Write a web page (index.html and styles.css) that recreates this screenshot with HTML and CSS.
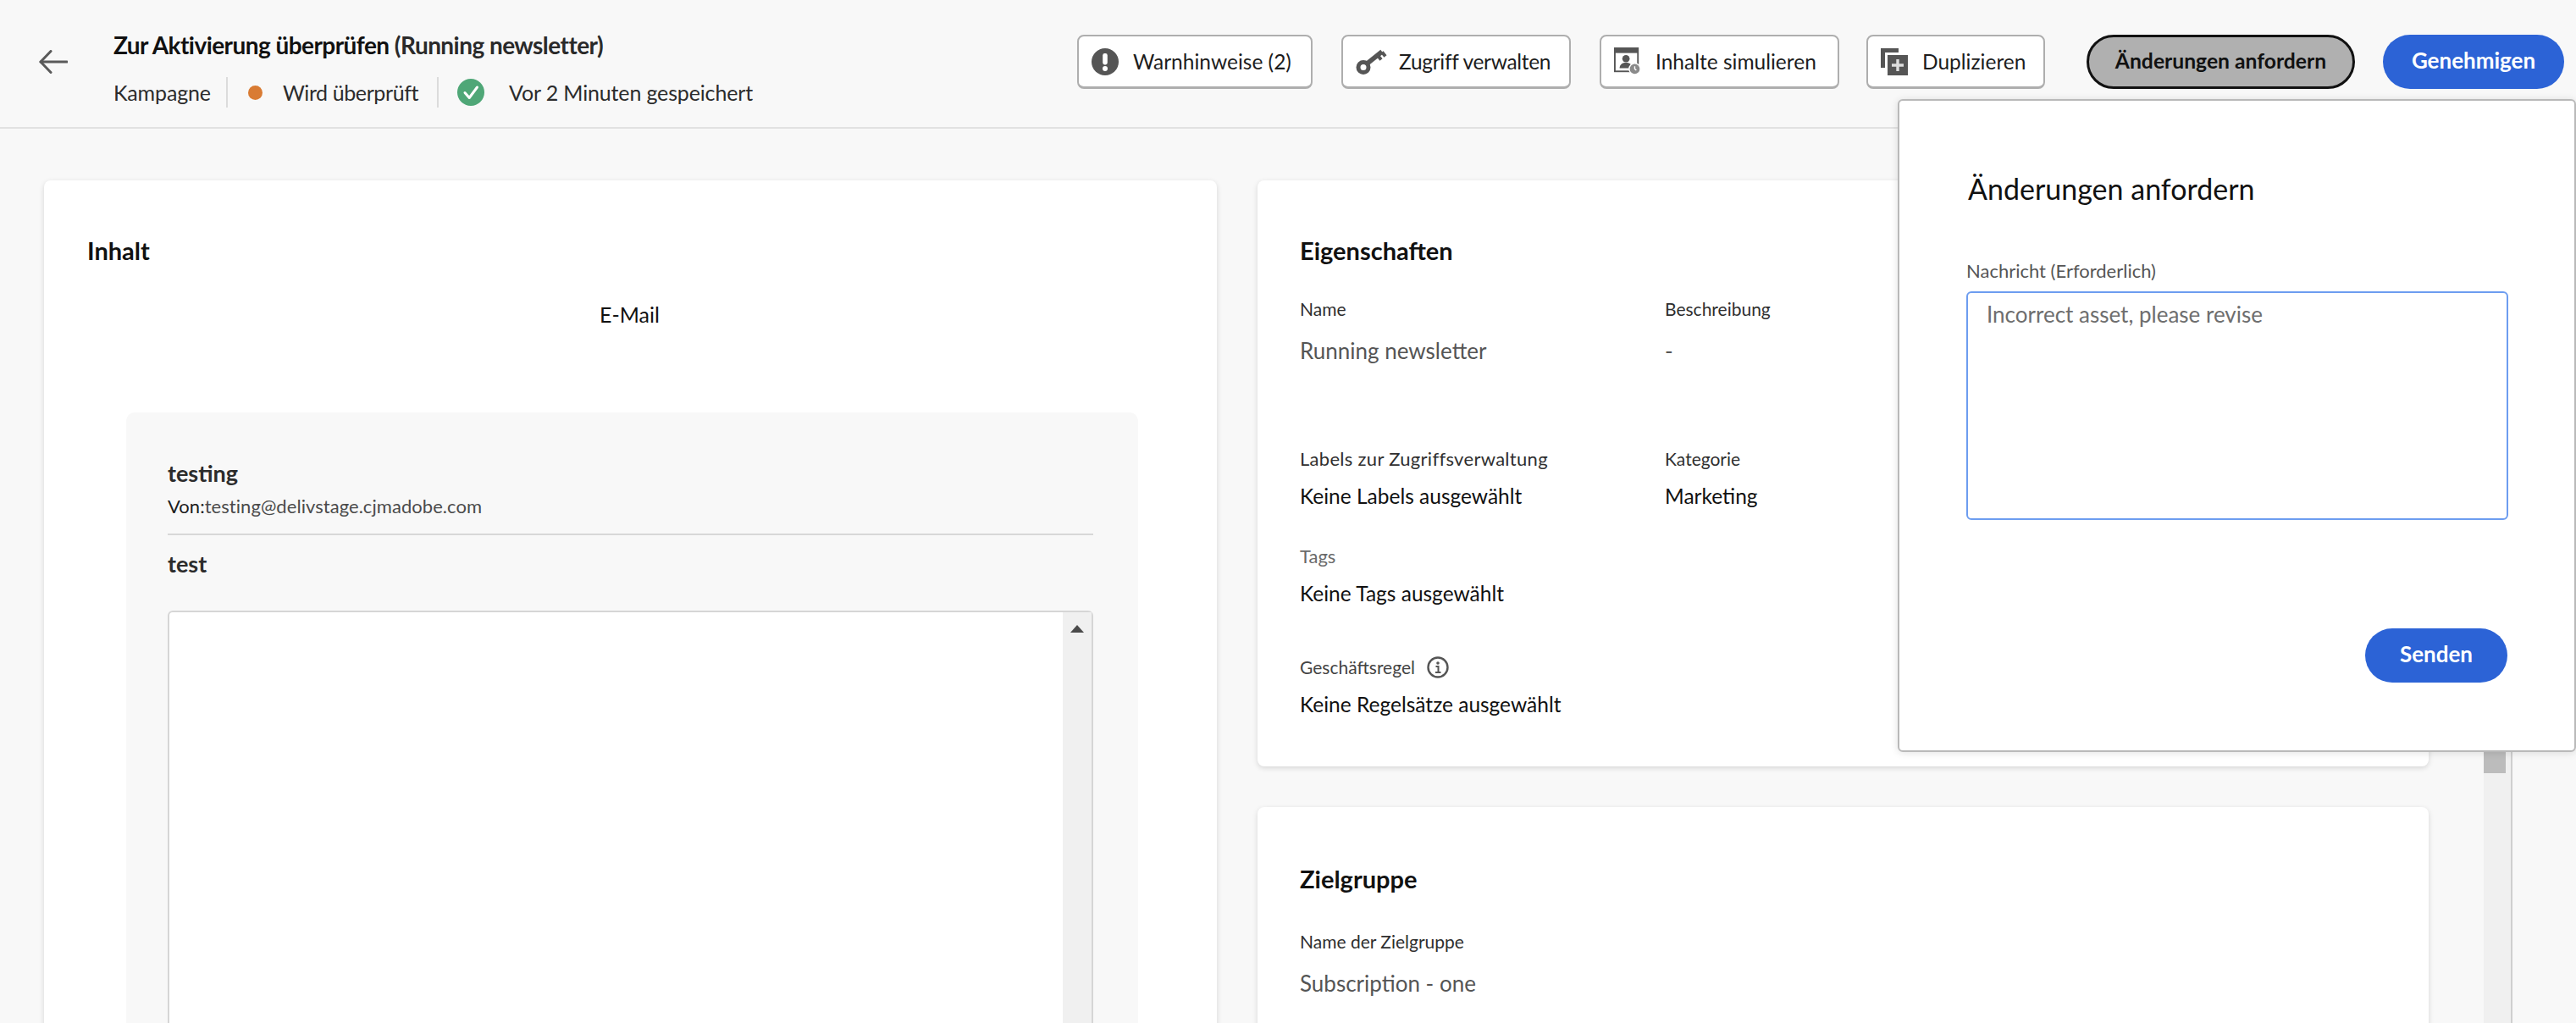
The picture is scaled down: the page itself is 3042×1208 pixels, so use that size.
FILE: index.html
```html
<!DOCTYPE html>
<html lang="de">
<head>
<meta charset="UTF-8">
<meta name="viewport" content="width=device-width, initial-scale=1.0">
<title>Zur Aktivierung überprüfen</title>
<link rel="stylesheet" href="styles.css">
</head>
<body>
<header class="topbar">
    <svg class="back-icon" viewBox="0 0 34 28" fill="none" stroke="#5a5a5a" stroke-width="3" stroke-linecap="round" stroke-linejoin="round"><path d="M33 14H2"/><path d="M14 1.5 2 14l12 12.5"/></svg>
    <div class="title-block">
        <h1 class="page-title">Zur Aktivierung überprüfen <span class="title-name">(Running newsletter)</span></h1>
        <div class="meta-row">
            <span class="meta-type">Kampagne</span>
            <span class="meta-sep"></span>
            <span class="status-dot"></span>
            <span class="meta-status">Wird überprüft</span>
            <span class="meta-sep sep-second"></span>
            <svg class="saved-icon" viewBox="0 0 32 32"><circle cx="16" cy="16" r="16" fill="#4fa777"/><path d="M9 16.5l5.2 6L23.5 10" fill="none" stroke="#fff" stroke-width="3" stroke-linecap="round" stroke-linejoin="round"/></svg>
            <span class="meta-saved">Vor 2 Minuten gespeichert</span>
        </div>
    </div>
    <div class="actions">
        <button class="tool-btn btn-warn">
            <svg class="tool-icon" viewBox="0 0 32 32"><circle cx="16" cy="16" r="16" fill="#555"/><rect x="13.2" y="6" width="5.6" height="13.5" rx="2.4" fill="#fff"/><circle cx="16" cy="24" r="3" fill="#fff"/></svg>
            Warnhinweise (2)
        </button>
        <button class="tool-btn btn-access">
            <svg class="tool-icon key-icon" viewBox="0 0 38 31" fill="none" stroke="#555"><circle cx="9" cy="22" r="6" stroke-width="5"/><path d="M13.5 17.5 31 3.5" stroke-width="5.5"/><path d="M26 8l4 5M31 4l4 5" stroke-width="4"/></svg>
            Zugriff verwalten
        </button>
        <button class="tool-btn btn-sim">
            <svg class="tool-icon sim-icon" viewBox="0 0 34 35"><rect x="1" y="1" width="29" height="29" fill="#fff" stroke="#555" stroke-width="2"/><rect x="1" y="1" width="29" height="6" fill="#555"/><circle cx="15" cy="14" r="4.6" fill="#555"/><path d="M7 26c0-5 4-7 8-7s8 2 8 7z" fill="#555"/><circle cx="26" cy="27" r="7" fill="#8a8a8a" stroke="#fff" stroke-width="1.5"/><path d="M26 23.5V27l2 1.5" fill="none" stroke="#fff" stroke-width="1.5"/></svg>
            Inhalte simulieren
        </button>
        <button class="tool-btn btn-dup">
            <svg class="tool-icon" viewBox="0 0 32 32"><path d="M0 0h21v5H5v18H0z" fill="#555"/><rect x="8" y="8" width="24" height="24" fill="#555"/><path d="M20 13v14M13 20h14" stroke="#ddd" stroke-width="3.4"/></svg>
            Duplizieren
        </button>
        <button class="pill-btn btn-request">Änderungen anfordern</button>
        <button class="pill-btn btn-approve">Genehmigen</button>
    </div>
</header>

<main class="page">
    <section class="card card-content">
        <h2 class="card-title">Inhalt</h2>
        <p class="channel">E-Mail</p>
        <div class="mail-box">
            <p class="mail-sender">testing</p>
            <p class="mail-from">Von:<span class="mail-address">testing@delivstage.cjmadobe.com</span></p>
            <hr class="mail-rule">
            <p class="mail-subject">test</p>
            <div class="mail-frame">
                <div class="frame-body"></div>
                <div class="frame-scroll"><span class="scroll-arrow"></span></div>
            </div>
        </div>
    </section>

    <div class="side-column">
        <section class="card card-props">
            <h2 class="card-title">Eigenschaften</h2>
            <div class="field-grid">
                <div class="field">
                    <p class="field-label">Name</p>
                    <p class="field-value value-muted">Running newsletter</p>
                </div>
                <div class="field">
                    <p class="field-label">Beschreibung</p>
                    <p class="field-value value-muted">-</p>
                </div>
            </div>
            <div class="field-grid row-labels">
                <div class="field">
                    <p class="field-label label-wide">Labels zur Zugriffsverwaltung</p>
                    <p class="field-value">Keine Labels ausgewählt</p>
                </div>
                <div class="field">
                    <p class="field-label">Kategorie</p>
                    <p class="field-value">Marketing</p>
                </div>
            </div>
            <div class="field row-tags">
                <p class="field-label label-light">Tags</p>
                <p class="field-value">Keine Tags ausgewählt</p>
            </div>
            <div class="field row-rule">
                <p class="field-label label-icon">Geschäftsregel
                    <svg class="info-icon" viewBox="0 0 26 26" fill="none"><circle cx="13" cy="13" r="11.5" stroke="#555" stroke-width="2.4"/><circle cx="13" cy="8" r="1.8" fill="#555"/><path d="M10.5 12h3v7M10 19h6.5" stroke="#555" stroke-width="2"/></svg>
                </p>
                <p class="field-value">Keine Regelsätze ausgewählt</p>
            </div>
        </section>

        <section class="card card-audience">
            <h2 class="card-title">Zielgruppe</h2>
            <div class="field row-audience">
                <p class="field-label">Name der Zielgruppe</p>
                <p class="field-value value-muted">Subscription - one</p>
            </div>
        </section>
    </div>

    <div class="page-scroll"><span class="page-thumb"></span></div>
</main>

<div class="popover">
    <h3 class="popover-title">Änderungen anfordern</h3>
    <label class="popover-label" for="message">Nachricht (Erforderlich)</label>
    <textarea class="popover-input" id="message">Incorrect asset, please revise</textarea>
    <div class="popover-footer">
        <button class="pill-btn btn-send">Senden</button>
    </div>
</div>
</body>
</html>
```

FILE: styles.css
```css
* {
    box-sizing: border-box;
}
html, body {
    margin: 0;
    height: 1208px;
    overflow: hidden;
}
body {
    position: relative;
    background: #f8f8f8;
    font-family: Lato, "Liberation Sans", sans-serif;
    color: #1d1d1d;
}
p, h1, h2, h3 {
    margin: 0;
}
button {
    font-family: inherit;
}

/* top bar */
.topbar {
    display: flex;
    align-items: flex-start;
    height: 152px;
    padding-left: 46px;
    border-bottom: 2px solid #e2e2e2;
}
.back-icon {
    width: 34px;
    height: 28px;
    margin-top: 59px;
    flex: none;
}
.title-block {
    margin-left: 54px;
    padding-top: 33px;
}
.page-title {
    font-size: 28px;
    line-height: 40px;
    font-weight: 700;
    letter-spacing: -0.55px;
    color: #111;
}
.title-name {
    color: #2a2a2a;
}
.meta-row {
    display: flex;
    align-items: center;
    height: 38px;
    margin-top: 17px;
    font-size: 25px;
    letter-spacing: -0.15px;
    color: #2c2c2c;
}
.meta-sep {
    width: 2px;
    height: 36px;
    margin-left: 18px;
    background: #dcdcdc;
}
.sep-second {
    margin-left: 22px;
}
.status-dot {
    width: 17px;
    height: 17px;
    margin-left: 24px;
    border-radius: 50%;
    background: #d97b33;
}
.meta-status {
    margin-left: 24px;
    letter-spacing: -0.4px;
}
.saved-icon {
    width: 32px;
    height: 32px;
    margin-left: 22px;
}
.meta-saved {
    margin-left: 29px;
}

.actions {
    display: flex;
    margin-left: auto;
    margin-top: 41px;
    margin-right: 14px;
}
.tool-btn {
    display: flex;
    align-items: center;
    height: 64px;
    padding: 0 0 0 15px;
    background: #fff;
    border: 2px solid #aeaeae;
    border-bottom-width: 3px;
    border-radius: 8px;
    font-size: 24.5px;
    color: #1d1d1d;
    white-space: nowrap;
}
.tool-icon {
    width: 32px;
    height: 32px;
    margin-right: 17px;
    flex: none;
}
.key-icon {
    width: 38px;
    margin-right: 13px;
}
.sim-icon {
    height: 35px;
}
.btn-warn { width: 278px; }
.btn-access { width: 271px; margin-left: 34px; letter-spacing: -0.3px; }
.btn-sim { width: 283px; margin-left: 34px; }
.btn-dup { width: 211px; margin-left: 32px; }

.pill-btn {
    height: 64px;
    border-radius: 32px;
    font-size: 26px;
    white-space: nowrap;
}
.btn-request {
    width: 317px;
    margin-left: 49px;
    padding: 0 0 4px;
    background: #b0b0b0;
    border: 3px solid #111;
    color: #111;
    font-size: 24.7px;
    font-weight: 700;
}
.btn-approve {
    width: 214px;
    margin-left: 33px;
    padding: 0 0 4px;
    background: #2c63d6;
    border: none;
    color: #fff;
    font-weight: 700;
}

/* page */
.page {
    display: flex;
    align-items: flex-start;
    padding: 61px 0 0 52px;
}
.card {
    background: #fff;
    border-radius: 8px;
    box-shadow: 0 2px 6px rgba(0, 0, 0, 0.14);
}
.card-title {
    font-size: 29px;
    line-height: 40px;
    font-weight: 700;
    color: #111;
}
.card-content {
    width: 1385px;
    height: 1100px;
    padding: 63px 53px 0 51px;
}
.channel {
    margin-top: 35px;
    font-size: 25px;
    line-height: 40px;
    text-align: center;
    color: #111;
}
.mail-box {
    width: 1195px;
    height: 800px;
    margin-top: 96px;
    margin-left: 46px;
    padding: 52px 53px 0 49px;
    background: #f8f8f8;
    border-radius: 10px;
}
.mail-sender {
    font-size: 27px;
    line-height: 40px;
    font-weight: 700;
    color: #2c2c2c;
}
.mail-from {
    margin-top: 4px;
    font-size: 22px;
    line-height: 30px;
    letter-spacing: 0.05px;
    color: #1d1d1d;
}
.mail-address {
    color: #4b4b4b;
}
.mail-rule {
    height: 2px;
    margin: 17px 0 0;
    border: none;
    background: #d8d8d8;
}
.mail-subject {
    margin-top: 14px;
    font-size: 27px;
    line-height: 40px;
    font-weight: 700;
    color: #2c2c2c;
}
.mail-frame {
    display: flex;
    height: 600px;
    margin-top: 35px;
    background: #fff;
    border: 2px solid #d6d6d6;
    border-radius: 6px;
}
.frame-body {
    flex: 1;
}
.frame-scroll {
    display: flex;
    justify-content: center;
    width: 34px;
    padding-top: 15px;
    background: #f0f0f0;
}
.scroll-arrow {
    width: 0;
    height: 0;
    border-left: 8px solid transparent;
    border-right: 8px solid transparent;
    border-bottom: 9px solid #4a4a4a;
}

.side-column {
    width: 1383px;
    margin-left: 48px;
}
.card-props {
    height: 692px;
    padding: 63px 50px 0;
}
.card-audience {
    height: 400px;
    margin-top: 48px;
    padding: 65px 50px 0;
}
.field-grid {
    display: grid;
    grid-template-columns: 431px 1fr;
}
.card-title + .field-grid {
    margin-top: 34px;
}
.field-label {
    font-size: 21px;
    line-height: 30px;
    color: #2f2f2f;
}
.label-wide {
    font-size: 22px;
    letter-spacing: 0.3px;
}
.label-light {
    font-size: 22px;
    color: #6a6a6a;
}
.label-icon {
    display: flex;
    align-items: center;
    color: #444;
}
.info-icon {
    width: 26px;
    height: 26px;
    margin-left: 14px;
}
.field-value {
    margin-top: 11px;
    font-size: 24.5px;
    line-height: 36px;
    color: #111;
}
.value-muted {
    margin-top: 16px;
    font-size: 26px;
    color: #555;
}
.row-labels { margin-top: 95px; }
.row-tags { margin-top: 38px; }
.row-rule { margin-top: 54px; }
.row-audience { margin-top: 39px; }

.page-scroll {
    width: 34px;
    height: 1060px;
    margin-left: 65px;
    background: #f0f0f0;
    border-right: 2px solid #cfcfcf;
}
.page-thumb {
    display: block;
    width: 26px;
    height: 700px;
    background: #bcbcbc;
}

/* request changes popover */
.popover {
    position: absolute;
    top: 117px;
    left: 2241px;
    right: 0;
    height: 771px;
    padding: 82px 79px 0 81px;
    background: #fff;
    border: 2px solid #b9b9b9;
    border-radius: 6px;
    box-shadow: 0 1px 10px rgba(0, 0, 0, 0.12);
}
.popover-title {
    font-size: 34px;
    line-height: 44px;
    font-weight: 400;
    color: #111;
}
.popover-label {
    display: block;
    margin-top: 60px;
    margin-left: -2px;
    font-size: 22px;
    line-height: 30px;
    color: #555;
}
.popover-input {
    display: block;
    width: 640px;
    height: 270px;
    margin-top: 9px;
    margin-left: -2px;
    padding: 7px 22px;
    border: 2px solid #6d9df0;
    border-radius: 6px;
    outline: none;
    resize: none;
    font-family: inherit;
    font-size: 26px;
    line-height: 36px;
    color: #6e6e6e;
}
.popover-footer {
    display: flex;
    justify-content: flex-end;
    margin-top: 128px;
}
.btn-send {
    width: 168px;
    padding: 0 0 4px;
    background: #2c63d6;
    border: none;
    color: #fff;
    font-weight: 700;
}
```
